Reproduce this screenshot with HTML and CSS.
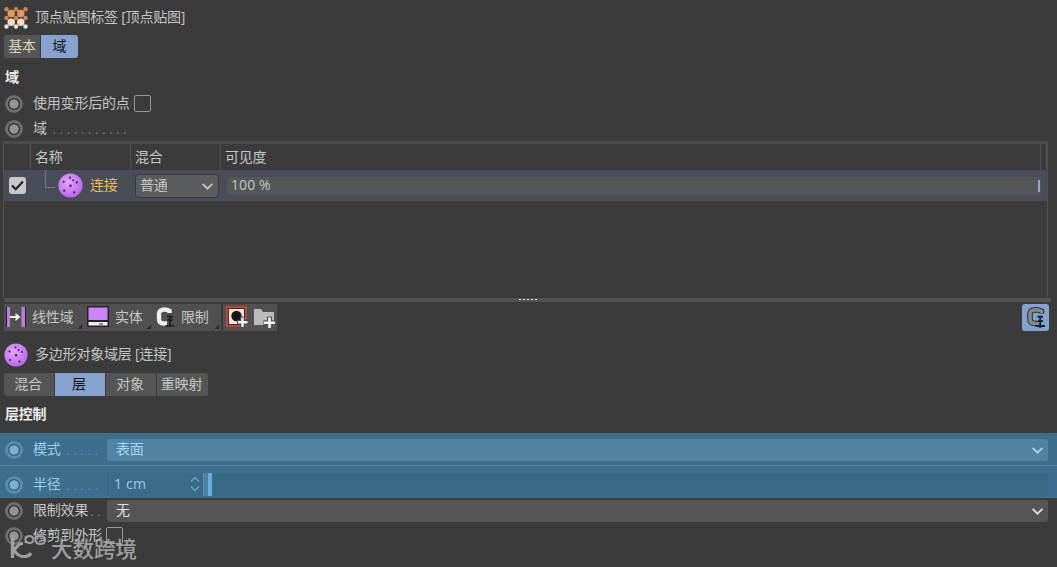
FILE: index.html
```html
<!DOCTYPE html>
<html lang="zh-CN">
<head>
  <meta charset="utf-8">
  <title>顶点贴图标签</title>
  <link rel="stylesheet" href="styles.css">
</head>
<body>
  <svg width="0" height="0" class="defs">
    <defs>
      <radialGradient id="ball-fill" cx="40%" cy="35%" r="65%">
        <stop offset="0" stop-color="#e3a5fb"/>
        <stop offset="1" stop-color="#bb68ed"/>
      </radialGradient>
      <symbol id="ball" viewBox="0 0 24 24">
        <circle cx="12" cy="12" r="11.6" fill="url(#ball-fill)"/>
        <g fill="#4b1c66">
          <circle cx="11.500" cy="4.500" r="1.1"/><circle cx="5.500" cy="8.500" r="1.1"/>
          <circle cx="18" cy="9" r="1.1"/><circle cx="12" cy="12.300" r="1.2"/>
          <circle cx="6" cy="17" r="1.1"/><circle cx="15.500" cy="18.500" r="1.1"/>
          <circle cx="14.500" cy="7" r="1"/>
        </g>
      </symbol>
      <symbol id="chevron" viewBox="0 0 12 8">
        <path d="M1.5 1.5 L6 6 L10.5 1.5" fill="none" stroke="currentColor" stroke-width="1.7"/>
      </symbol>
    </defs>
  </svg>

  <div class="panel">
    <div class="title">
      <svg class="vertex-icon" width="24" height="22" viewBox="0 0 24 22">
        <path d="M2 2 L22 20 M22 2 L2 20 M12 2 L2 11 L12 20 L22 11 Z" stroke="#8b5a38" stroke-width="1.5" fill="none"/>
        <g fill="#c98a54">
          <circle cx="2.5" cy="2.3" r="2.2"/><circle cx="12" cy="2.3" r="2.2"/><circle cx="21.5" cy="2.3" r="2.2"/>
          <circle cx="7.2" cy="6.5" r="3.7" fill="#e19a5c"/><circle cx="16.8" cy="6.5" r="3.7" fill="#e19a5c"/>
          <circle cx="2.5" cy="11" r="2.2"/><circle cx="12" cy="11" r="2.2"/><circle cx="21.5" cy="11" r="2.2"/>
        </g>
        <g fill="#e8e2dc">
          <circle cx="7.2" cy="15.3" r="3.7" fill="#f3d9c4"/><circle cx="16.8" cy="15.3" r="3.7" fill="#f3d9c4"/>
          <circle cx="2.5" cy="19.5" r="2.2"/><circle cx="12" cy="19.5" r="2.2"/><circle cx="21.5" cy="19.5" r="2.2"/>
        </g>
      </svg>
      <span>顶点贴图标签 [顶点贴图]</span>
    </div>

    <div class="tabs">
      <div class="tab tab-basic">基本</div>
      <div class="tab tab-field active">域</div>
    </div>

    <div class="heading">域</div>
    <div class="row">
      <i class="radio"></i><span class="label">使用变形后的点</span><i class="box"></i>
    </div>
    <div class="row">
      <i class="radio"></i><span class="label">域</span><span class="dots">...........</span>
    </div>

    <div class="list">
      <div class="list-head">
        <div></div><div>名称</div><div>混合</div><div>可见度</div><div></div>
      </div>
      <div class="list-row">
        <div class="check">
          <svg width="17" height="17" viewBox="0 0 17 17"><path d="M3 8.5 L6.7 12.2 L14 4.5" fill="none" stroke="#222" stroke-width="2.2"/></svg>
        </div>
        <div class="name">
          <i class="branch"></i>
          <svg width="25" height="25"><use href="#ball"/></svg>
          <span>连接</span>
        </div>
        <div class="blend"><span>普通</span><svg width="13" height="9"><use href="#chevron"/></svg></div>
        <div class="opacity"><span>100 %</span><i></i></div>
      </div>
      <div class="list-empty"></div>
    </div>
    <div class="splitter"><i></i><i></i><i></i><i></i><i></i></div>

    <div class="toolbar">
      <div class="tool tool-linear">
        <svg width="20" height="20" viewBox="0 0 20 20">
          <path d="M0 0H4V20H0Z M15.500 0H19.500V20H15.500Z" fill="#c07be8"/>
          <path d="M.5 0V20 M19.500 0V20" stroke="#221a28"/>
          <path d="M4 10H11" stroke="#eee" stroke-width="2"/>
          <path d="M9.500 6L14.500 10L9.500 14Z" fill="#eee"/>
        </svg>
        <span>线性域</span><i class="corner"></i>
      </div>
      <div class="tool tool-solid">
        <svg width="22" height="21" viewBox="0 0 22 21">
          <rect width="22" height="21" fill="#29202f"/>
          <rect x="1.5" y="1.5" width="19" height="12.500" fill="#ca86f5"/>
          <rect x="1.5" y="16" width="19" height="3.500" fill="#eee"/>
          <path d="M12 18H16" stroke="#333"/>
        </svg>
        <span>实体</span><i class="corner"></i>
      </div>
      <div class="tool tool-limit">
        <svg width="18" height="20" viewBox="0 0 18 20">
          <path d="M13.500 6V3.800Q11.500 2.500 8.500 2.500Q3 2.500 3 7V12Q3 16.500 8 16.500H11" fill="none" stroke="#eee" stroke-width="4.400"/>
          <path d="M14 9V19 M11 9.500H17 M11.500 13H16.500 M9.500 18.800H18" stroke="#202020" stroke-width="1.800"/>
        </svg>
        <span>限制</span><i class="corner"></i>
      </div>
      <div class="tool tool-add">
        <svg width="23" height="22" viewBox="0 0 23 22">
          <rect x="1" y="1" width="19" height="19" fill="#f0e4da" stroke="#bd4632" stroke-width="2"/>
          <rect x="2.5" y="2.5" width="16" height="16" fill="none" stroke="#432c26"/>
          <circle cx="10.5" cy="10" r="5.2" fill="#161616"/>
          <path d="M16.5 10.5V22 M11 16.3H22" stroke="#4a4a4a" stroke-width="5"/>
          <path d="M16.5 11.5V21 M12 16.3H21.5" stroke="#f4f4f4" stroke-width="2.4"/>
        </svg>
      </div>
      <div class="tool tool-folder">
        <svg width="24" height="22" viewBox="0 0 24 22">
          <path d="M1 2H8L10 5H21V18H1Z" fill="#bbb"/>
          <path d="M16.500 9.5V21.5 M10.5 15.8H22.5" stroke="#555" stroke-width="5"/>
          <path d="M16.5 10.5V21 M11 15.8H22" stroke="#f2f2f2" stroke-width="2.6"/>
        </svg>
      </div>
      <div class="tool-clamp">
        <svg width="20" height="22" viewBox="0 0 20 22">
          <path d="M15.500 6.500V4.200Q13 2.800 9 2.800Q4 3 4 7V12Q4 16.500 9 16.500H13" fill="none" stroke="#292d34" stroke-width="5.600"/>
          <path d="M15.500 6V4.200Q13 2.800 9 2.800Q4 3 4 7V12Q4 16.500 9 16.500H13" fill="none" stroke="#8b888c" stroke-width="3.6"/>
          <path d="M14.2 9V21 M11.500 9.800H17 M12 14H17 M9.500 19H19" stroke="#1b2230" stroke-width="1.900"/>
        </svg>
      </div>
    </div>

    <div class="title title-layer">
      <svg width="24" height="24"><use href="#ball"/></svg>
      <span>多边形对象域层 [连接]</span>
    </div>

    <div class="tabs tabs-layer">
      <div class="tab">混合</div>
      <div class="tab active">层</div>
      <div class="tab">对象</div>
      <div class="tab">重映射</div>
    </div>
    <div class="heading heading-layer">层控制</div>

    <div class="highlight">
      <div class="row row-mode">
        <i class="radio"></i><span class="label">模式</span><span class="dots">.....</span>
        <div class="select"><span>表面</span><svg width="13" height="9"><use href="#chevron"/></svg></div>
      </div>
      <div class="row row-radius">
        <i class="radio"></i><span class="label">半径</span><span class="dots">.....</span>
        <div class="number">
          <span>1 cm</span>
          <svg width="10" height="16" viewBox="0 0 10 16"><path d="M1 5.5L5 1.5L9 5.5M1 10.5L5 14.5L9 10.5" fill="none" stroke="#6ca5c2" stroke-width="1.4"/></svg>
        </div>
        <div class="slider"><i></i></div>
      </div>
    </div>

    <div class="row row-limit">
      <i class="radio"></i><span class="label">限制效果</span><span class="dots">..</span>
      <div class="select"><span>无</span><svg width="13" height="9"><use href="#chevron"/></svg></div>
    </div>
    <div class="row">
      <i class="radio"></i><span class="label">修剪到外形</span><i class="box"></i>
    </div>
  </div>

  <div class="watermark">
    <svg width="38" height="26" viewBox="0 0 38 26">
      <g fill="none" stroke="currentColor">
        <path d="M2.500 5V25" stroke-width="3.400"/>
        <path d="M4 17L9 11.500Q10 10.500 13 10.500M4 17Q8 23.500 13 23.500H15Q19 23.500 21 20" stroke-width="3.200"/>
        <path d="M15.500 3.500V10M15.500 6.500Q16 3 19.500 3Q23 3 23.500 6.500Q23 10 19.500 10Q16 10 15.500 6.500M25 6Q26 3 30 3Q35 3 35 7Q35 11 30.500 11Q26 11 25.500 7.500" stroke-width="1.900"/>
      </g>
    </svg>
    <span>大数跨境</span>
  </div>
</body>
</html>
```
FILE: styles.css
```css
* {
  box-sizing: border-box;
}

body {
  margin: 0;
  height: 567px;
  overflow: hidden;
  background-color: #3b3b3b;
  color: #c6c6c6;
  font-family: "Open Sans", "Noto Sans CJK SC", sans-serif;
  font-size: 14px;
  line-height: 20px;
  letter-spacing: -0.2px;
}

svg {
  display: block;
  flex: none;
}

.defs {
  position: absolute;
}

.panel {
  display: flex;
  flex-direction: column;
  padding-top: 2px;
}

.title {
  display: flex;
  align-items: center;
  gap: 7px;
  height: 33px;
  padding: 0 0 3px 4px;
}

.vertex-icon {
  margin-top: 2px;
}

.title-layer {
  height: 41px;
  padding: 5px 0 0 4px;
  align-items: flex-start;
}

.title-layer svg {
  margin-top: 6px;
}

.title-layer span {
  margin-top: 7px;
}

.tabs {
  display: flex;
  gap: 1px;
  height: 23px;
  padding-left: 4px;
}

.tab {
  display: flex;
  align-items: center;
  justify-content: center;
  width: 50px;
  padding-bottom: 1px;
  background-color: #555;
}

.tabs-layer .tab {
  padding: 0 2px 1px 0;
}

.tab:first-child {
  border-radius: 3px 0 0 3px;
}

.tab:last-child {
  width: 51px;
  border-radius: 0 3px 3px 0;
}

.tab.tab-basic {
  width: 36px;
  color: #d9d6b4;
}

.tab.tab-field {
  width: 37px;
}

.tab.active {
  background-color: #86a3cf;
  color: #111;
}

.heading {
  height: 33px;
  padding: 9px 0 0 5px;
  color: #ececec;
  font-weight: bold;
}

.heading-layer {
  height: 37px;
  padding-top: 8px;
}

.row {
  display: flex;
  align-items: center;
  flex: none;
  height: 25px;
  padding: 0 9px 0 5px;
}

.radio {
  flex: none;
  width: 18px;
  height: 18px;
  border: 3px solid #6d6d6d;
  border-radius: 50%;
  background: radial-gradient(circle, #949494 0 4.3px, #2d2d2d 5px);
}

.label {
  margin-left: 10px;
  padding-bottom: 2px;
  white-space: nowrap;
}

.box {
  width: 17px;
  height: 17px;
  margin-left: 4px;
  border: 1px solid #989898;
  border-radius: 2px;
}

.dots {
  flex: none;
  margin-left: 6px;
  padding-top: 2px;
  color: #858585;
  font-size: 12px;
  letter-spacing: 3.9px;
}

/* field list */
.list {
  height: 157px;
  margin: 0 9px 0 3px;
  border: 1px solid #505050;
  border-top: 3px solid #4c4c4c;
  border-bottom: 0;
}

.list-head,
.list-row {
  display: grid;
  grid-template-columns: 27px 100px 90px 1fr 6px;
}

.list-head {
  height: 26px;
}

.list-head div {
  padding: 3px 0 0 4px;
  border-right: 1px solid #525252;
}

.list-head div:last-child {
  padding: 0;
}

.list-row {
  align-items: center;
  height: 31px;
  background-color: #484d59;
}

.check {
  width: 17px;
  height: 17px;
  margin-left: 5px;
  border-radius: 3px;
  background-color: #c5c7c9;
}

.name {
  display: flex;
  align-items: center;
  height: 31px;
  padding-left: 14px;
  color: #edbc50;
}

.branch {
  width: 10px;
  height: 18px;
  margin: -13px 3px 0 0;
  border: solid #777b84;
  border-width: 0 0 1px 1px;
}

.name span {
  margin: -2px 0 0 7px;
}

.blend {
  display: flex;
  align-items: center;
  justify-content: space-between;
  width: 84px;
  height: 24px;
  margin-left: 4px;
  padding: 0 4px 2px;
  border: 1px solid #353944;
  border-radius: 4px;
  background-color: #5b5c5d;
}

.blend svg {
  margin-top: 3px;
}

.opacity {
  display: flex;
  align-items: center;
  justify-content: space-between;
  grid-column: 4 / 6;
  height: 18px;
  margin: 0 6px 0 6px;
  padding-left: 4px;
  border-radius: 3px;
  background-color: #555657;
  letter-spacing: 0.1px;
}

.opacity span {
  margin-top: -2px;
}

.opacity i {
  width: 2px;
  height: 12px;
  margin-right: 1px;
  background-color: #8fa5d2;
}

.list-empty {
  height: 97px;
}

.splitter {
  display: flex;
  justify-content: center;
  gap: 2px;
  height: 4px;
  margin: 0 6px 0 4px;
  padding-top: 1px;
  background-color: #535353;
}

.splitter i {
  width: 2px;
  height: 1px;
  background-color: #eee;
}

/* field buttons */
.toolbar {
  display: flex;
  height: 28px;
  margin-top: 2px;
  padding-left: 4px;
}

.tool {
  position: relative;
  display: flex;
  align-items: center;
  height: 27px;
  padding: 0 0 2px 2px;
  background-color: #505050;
}

.tool span {
  margin-left: 6px;
}

.tool-linear {
  width: 80px;
}

.tool-solid {
  width: 69px;
  padding-left: 3px;
}

.tool-limit {
  width: 68px;
  padding-left: 3px;
}

.tool-limit span {
  margin-left: 7px;
}

.tool-add {
  width: 29px;
  margin-left: 2px;
  padding-left: 3px;
}

.tool-folder {
  width: 25px;
  padding: 0 0 0 1px;
}

.corner {
  position: absolute;
  right: 2px;
  bottom: 2px;
  width: 4px;
  height: 4px;
  background: linear-gradient(135deg, transparent 50%, #292929 50%);
}

.tool-clamp {
  display: flex;
  align-items: center;
  justify-content: center;
  width: 27px;
  height: 27px;
  margin: 0 8px 0 auto;
  border-radius: 3px;
  background-color: #84a2ce;
}

/* attribute rows */
.select {
  display: flex;
  align-items: center;
  justify-content: space-between;
  height: 22px;
  padding: 0 4px 2px 9px;
  border-radius: 3px;
  background-color: #555;
  color: #e0e0e0;
}

.select svg {
  margin-top: 3px;
}

.highlight {
  height: 65px;
  padding-top: 1px;
  background-color: #3c6e8d;
  color: #9ccfe8;
}

.highlight .radio {
  border-color: #5e8ba6;
  background: radial-gradient(circle, #79b1d2 0 4.3px, #2b5c7c 5px);
}

.highlight .dots {
  color: #69a0bd;
}

.highlight .select {
  background-color: #4f83a1;
  color: #a4d7ee;
}

.row-mode,
.row-limit {
  display: grid;
  grid-template-columns: 18px auto 1fr 941px;
}

.row-mode {
  height: 32px;
  border-bottom: 1px solid #5080a0;
}

.row-radius {
  display: grid;
  grid-template-columns: 18px auto 1fr 96px 845px;
  height: 31px;
  padding-top: 6px;
}

.number {
  display: flex;
  align-items: center;
  justify-content: space-between;
  height: 23px;
  padding: 0 3px 1px 6px;
  border-left: 1px solid #356480;
  background-color: #3b6b88;
  letter-spacing: 0.2px;
}

.number span {
  margin-top: -1px;
}

.slider {
  height: 23px;
  padding-left: 4px;
  border-left: 1px solid #5b91b5;
  background: linear-gradient(to right, #4a80a2 5px, #386985 5px);
}

.slider i {
  display: block;
  width: 4px;
  height: 23px;
  background-color: #69aede;
}

.row-limit .dots {
  margin-left: 2px;
}

/* corner mark over the last row */
.watermark {
  position: absolute;
  left: 10px;
  top: 533px;
  display: flex;
  align-items: center;
  gap: 3px;
  color: #aaa;
  opacity: 0.9;
}

.watermark span {
  margin-top: 5px;
  font-size: 21.5px;
  font-weight: 500;
  letter-spacing: 0;
}
```
